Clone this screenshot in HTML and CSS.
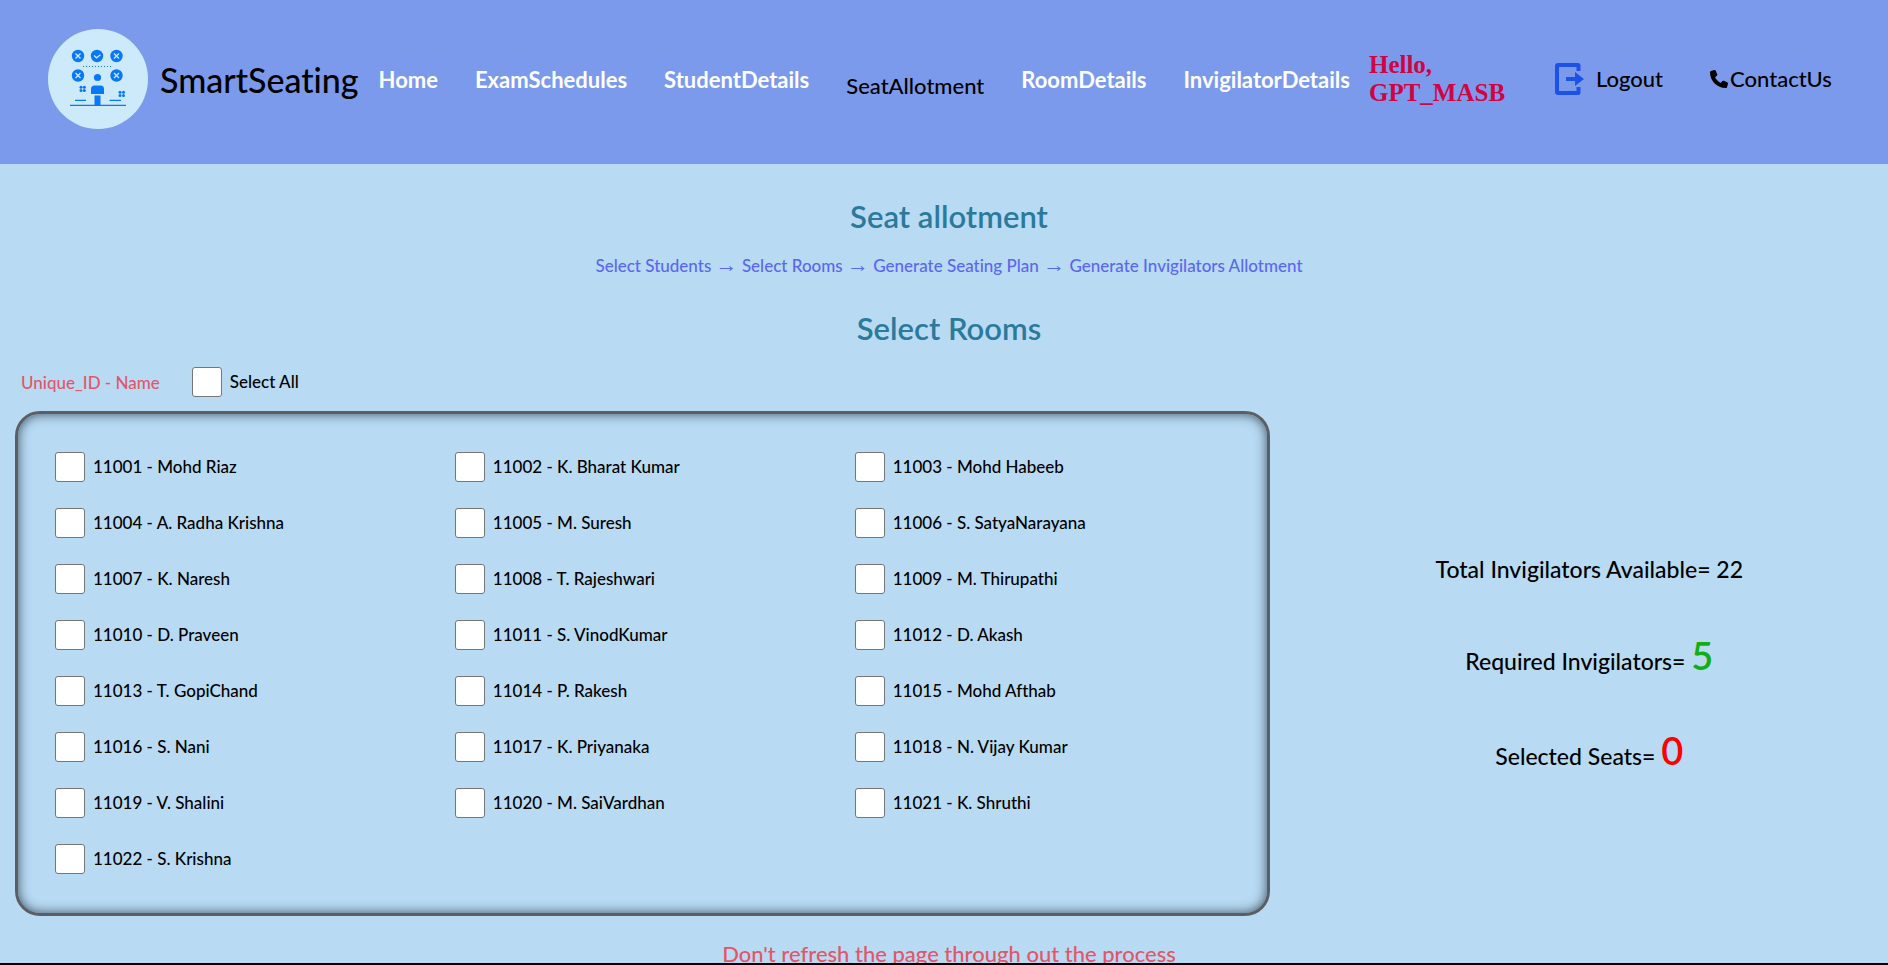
FILE: index.html
```html
<!DOCTYPE html>
<html lang="en">
<head>
<meta charset="utf-8">
<title>SmartSeating</title>
<link rel="stylesheet" href="styles.css">
</head>
<body>
<header class="header">
  <svg class="logo" viewBox="0 0 100 100" aria-hidden="true">
    <circle cx="50" cy="50" r="50" fill="#cdeafa"/>
    <g fill="#0878fa">
      <circle cx="30" cy="27" r="6.2"/><circle cx="49" cy="27" r="6.2"/><circle cx="68.500" cy="27" r="6.200"/>
      <circle cx="30" cy="46.500" r="6.200"/><circle cx="68.500" cy="46.500" r="6.200"/>
      <circle cx="49.500" cy="48.500" r="3.600"/>
      <path d="M43 65v-5q0-3.500 3.500-3.500h6q3.500 0 3.500 3.500v5z"/>
      <rect x="46.500" y="66.500" width="6" height="10"/>
      <circle cx="33" cy="58.300" r="1.500"/><circle cx="36.300" cy="58.300" r="1.500"/><circle cx="33" cy="61.600" r="1.500"/><circle cx="36.300" cy="61.600" r="1.500"/>
      <circle cx="72" cy="63.300" r="1.500"/><circle cx="75.500" cy="63.300" r="1.500"/><circle cx="72" cy="66.600" r="1.500"/><circle cx="75.500" cy="66.600" r="1.500"/>
    </g>
    <g fill="none" stroke="#cdeafa" stroke-width="1.300">
      <path d="M27.500 24.500l5 5m0-5l-5 5M66 24.500l5 5m0-5l-5 5M27.500 44l5 5m0-5l-5 5M66 44l5 5m0-5l-5 5M46 26.500l2.500 2.300 4-3"/>
    </g>
    <g fill="none" stroke="#0878fa">
      <path d="M35 37.500h29" stroke-dasharray="1 2"/>
      <path d="M27 71.300h11M61.500 71.300h11.500M22 76.300h56" stroke-width="1.300"/>
    </g>
  </svg>
  <div class="brand">SmartSeating</div>
  <nav class="nav">
    <a href="#">Home</a>
    <a href="#">ExamSchedules</a>
    <a href="#">StudentDetails</a>
    <a href="#" class="current" aria-current="page">SeatAllotment</a>
    <a href="#">RoomDetails</a>
    <a href="#">InvigilatorDetails</a>
  </nav>
  <div class="hello">Hello, GPT_MASB</div>
  <a href="#" class="action logout">
    <svg class="logout-icon" viewBox="0 0 30 32" aria-hidden="true">
      <path d="M23.500 8V2.500q0-.500-.500-.500H3q-1 0-1 1v26q0 1 1 1h20q.500 0 .500-.500V24" fill="none" stroke="#1d52e8" stroke-width="4"/>
      <path d="M11 14h9V9l9 7-9 7v-5h-9z" fill="#1d52e8"/>
    </svg>Logout</a>
  <a href="#" class="action contact">
    <svg class="phone-icon" viewBox="0 0 512 512" aria-hidden="true">
      <path d="M164.900 24.600c-7.700-18.600-28-28.500-47.400-23.200l-88 24C12.100 30.200 0 46 0 64c0 247.400 200.600 448 448 448 18 0 33.800-12.100 38.600-29.500l24-88c5.300-19.400-4.600-39.700-23.200-47.400l-96-40c-16.300-6.800-35.200-2.100-46.300 11.600L304.700 368C234.300 334.700 177.300 277.700 144 207.300l49.300-40.300c13.700-11.200 18.400-30 11.600-46.300l-40-96z"/>
    </svg>ContactUs</a>
</header>
<main class="page">
  <h1 class="heading">Seat allotment</h1>
  <p class="steps">Select Students <span class="arrow">→</span> Select Rooms <span class="arrow">→</span> Generate Seating Plan <span class="arrow">→</span> Generate Invigilators Allotment</p>
  <h2 class="heading">Select Rooms</h2>
  <div class="toolbar">
    <span class="legend">Unique_ID - Name</span>
    <label class="option"><input type="checkbox">Select All</label>
  </div>
  <div class="content">
    <div class="list">
      <label class="option"><input type="checkbox">11001 - Mohd Riaz</label>
      <label class="option"><input type="checkbox">11002 - K. Bharat Kumar</label>
      <label class="option"><input type="checkbox">11003 - Mohd Habeeb</label>
      <label class="option"><input type="checkbox">11004 - A. Radha Krishna</label>
      <label class="option"><input type="checkbox">11005 - M. Suresh</label>
      <label class="option"><input type="checkbox">11006 - S. SatyaNarayana</label>
      <label class="option"><input type="checkbox">11007 - K. Naresh</label>
      <label class="option"><input type="checkbox">11008 - T. Rajeshwari</label>
      <label class="option"><input type="checkbox">11009 - M. Thirupathi</label>
      <label class="option"><input type="checkbox">11010 - D. Praveen</label>
      <label class="option"><input type="checkbox">11011 - S. VinodKumar</label>
      <label class="option"><input type="checkbox">11012 - D. Akash</label>
      <label class="option"><input type="checkbox">11013 - T. GopiChand</label>
      <label class="option"><input type="checkbox">11014 - P. Rakesh</label>
      <label class="option"><input type="checkbox">11015 - Mohd Afthab</label>
      <label class="option"><input type="checkbox">11016 - S. Nani</label>
      <label class="option"><input type="checkbox">11017 - K. Priyanaka</label>
      <label class="option"><input type="checkbox">11018 - N. Vijay Kumar</label>
      <label class="option"><input type="checkbox">11019 - V. Shalini</label>
      <label class="option"><input type="checkbox">11020 - M. SaiVardhan</label>
      <label class="option"><input type="checkbox">11021 - K. Shruthi</label>
      <label class="option"><input type="checkbox">11022 - S. Krishna</label>
    </div>
    <div class="stats">
      <p>Total Invigilators Available= 22</p>
      <p>Required Invigilators= <span class="count required">5</span></p>
      <p>Selected Seats= <span class="count selected">0</span></p>
    </div>
  </div>
  <p class="warning">Don't refresh the page through out the process</p>
</main>
</body>
</html>
```
FILE: styles.css
```css
* {
  box-sizing: border-box;
}

body {
  margin: 0;
  height: 100vh;
  display: flex;
  flex-direction: column;
  overflow: hidden;
  border-bottom: 2px solid #000;
  background: #b8daf3;
  color: #000;
  font-family: Lato, "Liberation Serif", sans-serif;
  font-size: 17px;
  font-weight: 500;
  font-variant-ligatures: none;
}

p,
h1,
h2 {
  margin: 0;
}

a {
  color: inherit;
  text-decoration: none;
}

.header {
  display: flex;
  align-items: center;
  flex: none;
  height: 164px;
  padding: 0 48px 6px;
  background: #7c9aeb;
  font-size: 22px;
  line-height: 28px;
}

.logo {
  flex: none;
  width: 100px;
  height: 100px;
}

.brand {
  margin-left: 12px;
  padding-top: 2px;
  font-size: 34px;
  line-height: 42px;
}

.nav {
  display: flex;
  gap: 37px;
  margin-left: 20px;
  padding-top: 8px;
  color: #fff;
  font-weight: 700;
}

.current {
  padding-top: 6px;
  color: #000;
  font-weight: 500;
}

.hello {
  width: 138px;
  margin-left: 19px;
  color: #d00345;
  font-family: "Liberation Serif", serif;
  font-size: 25px;
  font-weight: 700;
}

.action {
  display: flex;
  align-items: center;
}

.logout {
  margin-left: 48px;
}

.logout-icon {
  width: 30px;
  height: 32px;
  margin-right: 11px;
}

.contact {
  margin-left: 47px;
}

.phone-icon {
  width: 18px;
  height: 18px;
  margin-right: 2px;
}

.page {
  display: flex;
  flex-direction: column;
  padding: 32px 5px 0 15px;
}

.heading {
  color: #2b7a9b;
  font-size: 31px;
  font-weight: 600;
  line-height: 40px;
  text-align: center;
}

.steps {
  margin: 18px 0 30px;
  color: #5b67f0;
  line-height: 24px;
  text-align: center;
}

.arrow {
  font-family: "Liberation Serif", serif;
  font-size: 22px;
  line-height: 1;
}

.toolbar {
  display: flex;
  align-items: center;
  gap: 32px;
  margin-top: 19px;
  padding-left: 6px;
}

.legend {
  color: #e35668;
}

.option {
  display: flex;
  align-items: center;
  gap: 8px;
  line-height: 24px;
}

.option input {
  appearance: none;
  flex: none;
  width: 30px;
  height: 30px;
  margin: 0;
  border: 1px solid #767676;
  border-radius: 3px;
  background: #fff;
}

.option input:checked {
  background: #0878fa;
}

.content {
  display: flex;
  align-items: center;
  margin-top: 14px;
}

.list {
  display: grid;
  grid-template-columns: repeat(3, 1fr);
  gap: 26px 0;
  width: calc(67% + 3px);
  padding: 38px 12px 39px 37px;
  border: 3px solid #5a5f64;
  border-radius: 25px;
  box-shadow: inset 0 0 12px #3c5060;
}

.stats {
  display: flex;
  flex-direction: column;
  flex: 1;
  gap: 49px;
  padding-left: 26px;
  font-size: 23px;
  text-align: center;
}

.count {
  font-size: 38px;
  font-weight: 600;
}

.required {
  color: #14ae14;
}

.selected {
  color: #f00;
}

.warning {
  margin-top: 22px;
  color: #e35668;
  font-size: 22px;
  line-height: 32px;
  text-align: center;
}
```
